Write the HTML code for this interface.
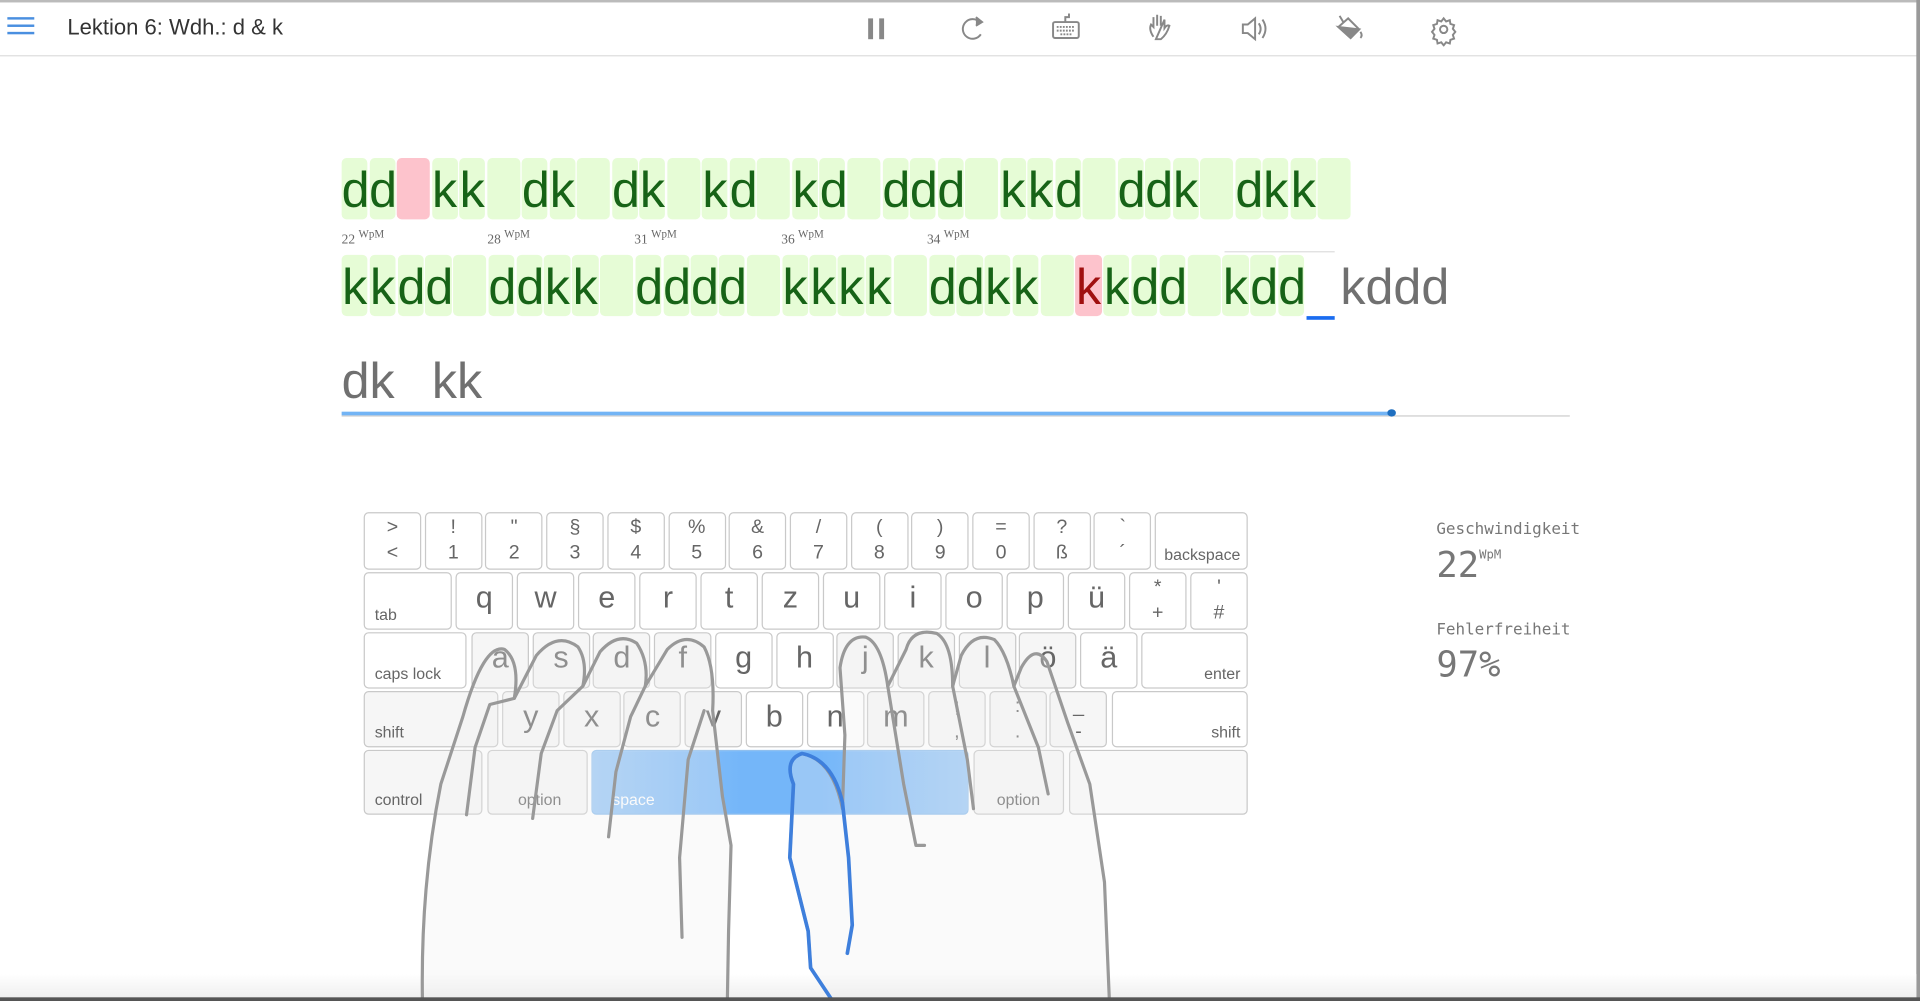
<!DOCTYPE html>
<html><head><meta charset="utf-8">
<style>
html,body{margin:0;padding:0;width:1920px;height:1001px;overflow:hidden;background:#fff;}
#s{position:absolute;left:0;top:0;width:1568px;height:817px;transform:scale(1.22449,1.22521);transform-origin:0 0;font-family:"Liberation Sans",Arial,sans-serif;}
.abs{position:absolute;}
.line{position:absolute;left:279px;height:50px;display:flex;}
.c{display:inline-block;height:50px;background:#e6fcd6;border-radius:4px;color:#176317;font-size:41px;line-height:53px;text-align:center;margin-right:1.5px;}
.l1 .c{width:21px}.l1 .c.sp{width:27.1px}
.l2 .c{width:21.3px}.l2 .c.sp{width:27.2px}
.pk{background:#fdc3cc !important;color:#a01010 !important;}
.wpm{position:absolute;top:186px;font-family:"Liberation Serif",serif;font-size:11px;color:#666;}
.wpm sup{font-size:9px;}
.key{position:absolute;box-sizing:border-box;border:1px solid #c9c9c9;border-radius:4px;background:#fff;color:#666;text-align:center;}
.key .t{position:absolute;left:0;right:0;top:3px;font-size:16px;}
.key .b{position:absolute;left:0;right:0;top:24px;font-size:16px;}
.key .m{position:absolute;left:0;right:0;top:6px;font-size:25px;}
.key .sl{position:absolute;left:8px;bottom:4px;font-size:13px;}
.key .sr{position:absolute;right:5px;bottom:4px;font-size:13px;}
.st{position:absolute;left:1173px;font-family:"DejaVu Sans Mono",monospace;color:#777;}
</style></head><body><div id="s">
<div class="abs" style="left:0;top:0;width:1568px;height:2px;background:#bbb"></div>
<div class="abs" style="left:0;top:45px;width:1568px;height:1px;background:#ddd"></div>
<div class="abs" style="left:1565px;top:0;width:3px;height:817px;background:#999"></div>
<div class="abs" style="left:6px;top:14px;width:22px;height:2px;background:#4a8fe0;box-shadow:0 6px 0 #4a8fe0,0 12px 0 #4a8fe0"></div>
<div class="abs" style="left:55px;top:12px;font-size:18px;color:#333">Lektion 6: Wdh.: d &amp; k</div>
<svg class="abs" style="left:700px;top:10px" width="500" height="28" viewBox="700 10 500 28" fill="none" stroke="#888" stroke-width="1.6">
<rect x="709" y="15" width="4" height="17" fill="#888" stroke="none"/><rect x="718" y="15" width="4" height="17" fill="#888" stroke="none"/>
<path d="M800,18 A8,8 0 1 0 801,28"/><path d="M797,14 L802,18 L797,21" fill="#888"/>
<rect x="860" y="18" width="21" height="13" rx="1.5"/><path d="M870,18 V14 H873 V11"/><path d="M863,22h15M863,25h15M866,28h9" stroke-dasharray="1.5 1"/>
<path d="M942,30 Q938,24 940,20 L942,22 V14 M942,14 V22 M945,12 V21 M948,13 V21 M951,16 V23 Q953,20 955,21 Q953,28 948,32 H944 Z"/>
<path d="M1015,20 H1019 L1025,15 V32 L1019,27 H1015 Z"/><path d="M1028,19 Q1031,23.5 1028,28 M1031,16 Q1036,23.5 1031,31"/>
<path d="M1093,22 L1101,15 L1110,24 L1103,31 Z" /><path d="M1093,22 L1110,24 L1103,31 Z" fill="#888"/><path d="M1097,18 L1094,13"/><path d="M1111,26 Q1113,29 1111,31"/>
<circle cx="1179" cy="24" r="3"/><path d="M1179,15 l2,2.5 3,-1 0.5,3 3,1 -1,3 2,2.5 -2,2.5 1,3 -3,1 -0.5,3 -3,-1 -2,2.5 -2,-2.5 -3,1 -0.5,-3 -3,-1 1,-3 -2,-2.5 2,-2.5 -1,-3 3,-1 0.5,-3 3,1 z"/>
</svg>

<div class="line l1" style="top:129px">
<span class="c">d</span><span class="c">d</span><span class="c sp pk"></span><span class="c">k</span><span class="c">k</span><span class="c sp"></span><span class="c">d</span><span class="c">k</span><span class="c sp"></span><span class="c">d</span><span class="c">k</span><span class="c sp"></span><span class="c">k</span><span class="c">d</span><span class="c sp"></span><span class="c">k</span><span class="c">d</span><span class="c sp"></span><span class="c">d</span><span class="c">d</span><span class="c">d</span><span class="c sp"></span><span class="c">k</span><span class="c">k</span><span class="c">d</span><span class="c sp"></span><span class="c">d</span><span class="c">d</span><span class="c">k</span><span class="c sp"></span><span class="c">d</span><span class="c">k</span><span class="c">k</span><span class="c sp"></span>
</div>
<div class="wpm" style="left:279px">22 <sup>WpM</sup></div>
<div class="wpm" style="left:398px">28 <sup>WpM</sup></div>
<div class="wpm" style="left:518px">31 <sup>WpM</sup></div>
<div class="wpm" style="left:638px">36 <sup>WpM</sup></div>
<div class="wpm" style="left:757px">34 <sup>WpM</sup></div>
<div class="abs" style="left:1000px;top:205px;width:90px;height:1px;background:#ddd"></div>
<div class="line l2" style="top:208px">
<span class="c">k</span><span class="c">k</span><span class="c">d</span><span class="c">d</span><span class="c sp"></span><span class="c">d</span><span class="c">d</span><span class="c">k</span><span class="c">k</span><span class="c sp"></span><span class="c">d</span><span class="c">d</span><span class="c">d</span><span class="c">d</span><span class="c sp"></span><span class="c">k</span><span class="c">k</span><span class="c">k</span><span class="c">k</span><span class="c sp"></span><span class="c">d</span><span class="c">d</span><span class="c">k</span><span class="c">k</span><span class="c sp"></span><span class="c pk">k</span><span class="c">k</span><span class="c">d</span><span class="c">d</span><span class="c sp"></span><span class="c">k</span><span class="c">d</span><span class="c">d</span>
<span style="display:inline-block;width:23px;height:50px;border-bottom:3px solid #1a6cf0;box-sizing:content-box"></span>
<span style="font-size:41px;line-height:53px;color:#707070;margin-left:5px">kddd</span>
</div>
<div class="abs" style="left:279px;top:288px;font-size:41px;color:#707070;word-spacing:19px">dk kk</div>
<div class="abs" style="left:279px;top:339px;width:1003px;height:1px;background:#ccc"></div>
<div class="abs" style="left:279px;top:336px;width:858px;height:3px;background:#72b4f5"></div>
<div class="abs" style="left:1133px;top:334px;width:7px;height:6px;border-radius:50%;background:#1f6fc0"></div>

<div class="abs" style="left:0;top:795px;width:1565px;height:20px;background:linear-gradient(#fff,#eee)"></div>

<!-- keyboard -->
<div class="key" style="left:297px;top:418px;width:47px;height:47px"><span class="t">&gt;</span><span class="b">&lt;</span></div>
<div class="key" style="left:346.7px;top:418px;width:47px;height:47px"><span class="t">!</span><span class="b">1</span></div>
<div class="key" style="left:396.4px;top:418px;width:47px;height:47px"><span class="t">"</span><span class="b">2</span></div>
<div class="key" style="left:446.1px;top:418px;width:47px;height:47px"><span class="t">§</span><span class="b">3</span></div>
<div class="key" style="left:495.8px;top:418px;width:47px;height:47px"><span class="t">$</span><span class="b">4</span></div>
<div class="key" style="left:545.5px;top:418px;width:47px;height:47px"><span class="t">%</span><span class="b">5</span></div>
<div class="key" style="left:595.2px;top:418px;width:47px;height:47px"><span class="t">&amp;</span><span class="b">6</span></div>
<div class="key" style="left:644.9px;top:418px;width:47px;height:47px"><span class="t">/</span><span class="b">7</span></div>
<div class="key" style="left:694.6px;top:418px;width:47px;height:47px"><span class="t">(</span><span class="b">8</span></div>
<div class="key" style="left:744.3px;top:418px;width:47px;height:47px"><span class="t">)</span><span class="b">9</span></div>
<div class="key" style="left:794px;top:418px;width:47px;height:47px"><span class="t">=</span><span class="b">0</span></div>
<div class="key" style="left:843.7px;top:418px;width:47px;height:47px"><span class="t">?</span><span class="b">ß</span></div>
<div class="key" style="left:893.4px;top:418px;width:47px;height:47px"><span class="t">`</span><span class="b">´</span></div>
<div class="key" style="left:943px;top:418px;width:76px;height:47px"><span class="sr">backspace</span></div>

<div class="key" style="left:297px;top:467px;width:72px;height:47px"><span class="sl">tab</span></div>
<div class="key" style="left:372px;top:467px;width:47px;height:47px"><span class="m">q</span></div>
<div class="key" style="left:422px;top:467px;width:47px;height:47px"><span class="m">w</span></div>
<div class="key" style="left:472px;top:467px;width:47px;height:47px"><span class="m">e</span></div>
<div class="key" style="left:522px;top:467px;width:47px;height:47px"><span class="m">r</span></div>
<div class="key" style="left:572px;top:467px;width:47px;height:47px"><span class="m">t</span></div>
<div class="key" style="left:622px;top:467px;width:47px;height:47px"><span class="m">z</span></div>
<div class="key" style="left:672px;top:467px;width:47px;height:47px"><span class="m">u</span></div>
<div class="key" style="left:722px;top:467px;width:47px;height:47px"><span class="m">i</span></div>
<div class="key" style="left:772px;top:467px;width:47px;height:47px"><span class="m">o</span></div>
<div class="key" style="left:822px;top:467px;width:47px;height:47px"><span class="m">p</span></div>
<div class="key" style="left:872px;top:467px;width:47px;height:47px"><span class="m">ü</span></div>
<div class="key" style="left:922px;top:467px;width:47px;height:47px"><span class="t">*</span><span class="b">+</span></div>
<div class="key" style="left:972px;top:467px;width:47px;height:47px"><span class="t">'</span><span class="b">#</span></div>

<div class="key" style="left:297px;top:516px;width:84px;height:46px"><span class="sl">caps lock</span></div>
<div class="key" style="left:385px;top:516px;width:47px;height:46px;background:#f6f6f6"><span class="m">a</span></div>
<div class="key" style="left:434.7px;top:516px;width:47px;height:46px;background:#f6f6f6"><span class="m">s</span></div>
<div class="key" style="left:484.4px;top:516px;width:47px;height:46px;background:#f6f6f6"><span class="m">d</span></div>
<div class="key" style="left:534.1px;top:516px;width:47px;height:46px;background:#f6f6f6"><span class="m">f</span></div>
<div class="key" style="left:583.8px;top:516px;width:47px;height:46px"><span class="m">g</span></div>
<div class="key" style="left:633.5px;top:516px;width:47px;height:46px"><span class="m">h</span></div>
<div class="key" style="left:683.2px;top:516px;width:47px;height:46px;background:#f6f6f6"><span class="m">j</span></div>
<div class="key" style="left:732.9px;top:516px;width:47px;height:46px;background:#f6f6f6"><span class="m">k</span></div>
<div class="key" style="left:782.6px;top:516px;width:47px;height:46px;background:#f6f6f6"><span class="m">l</span></div>
<div class="key" style="left:832.3px;top:516px;width:47px;height:46px;background:#f6f6f6"><span class="m">ö</span></div>
<div class="key" style="left:882px;top:516px;width:47px;height:46px"><span class="m">ä</span></div>
<div class="key" style="left:932px;top:516px;width:87px;height:46px"><span class="sr">enter</span></div>

<div class="key" style="left:297px;top:564px;width:110px;height:46px;background:#f6f6f6"><span class="sl">shift</span></div>
<div class="key" style="left:410px;top:564px;width:47px;height:46px;background:#f6f6f6"><span class="m">y</span></div>
<div class="key" style="left:459.7px;top:564px;width:47px;height:46px;background:#f6f6f6"><span class="m">x</span></div>
<div class="key" style="left:509.4px;top:564px;width:47px;height:46px;background:#f6f6f6"><span class="m">c</span></div>
<div class="key" style="left:559.1px;top:564px;width:47px;height:46px;background:#f6f6f6"><span class="m">v</span></div>
<div class="key" style="left:608.8px;top:564px;width:47px;height:46px"><span class="m">b</span></div>
<div class="key" style="left:658.5px;top:564px;width:47px;height:46px"><span class="m">n</span></div>
<div class="key" style="left:708.2px;top:564px;width:47px;height:46px;background:#f6f6f6"><span class="m">m</span></div>
<div class="key" style="left:757.9px;top:564px;width:47px;height:46px;background:#f6f6f6"><span class="t">;</span><span class="b">,</span></div>
<div class="key" style="left:807.6px;top:564px;width:47px;height:46px;background:#f6f6f6"><span class="t">:</span><span class="b">.</span></div>
<div class="key" style="left:857.3px;top:564px;width:47px;height:46px;background:#f6f6f6"><span class="t">_</span><span class="b">-</span></div>
<div class="key" style="left:908px;top:564px;width:111px;height:46px"><span class="sr">shift</span></div>

<div class="key" style="left:297px;top:612px;width:97px;height:53px;background:#f6f6f6"><span class="sl">control</span></div>
<div class="key" style="left:398px;top:612px;width:82px;height:53px;background:#f6f6f6"><span class="sl" style="left:24px">option</span></div>
<div class="key" style="left:483px;top:612px;width:308px;height:53px;background:linear-gradient(90deg,#9cc9f7,#74b6f9 40%,#74b6f9 60%,#9cc9f7);border-color:#8fbfee"><span class="sl" style="left:16px;color:#fff">space</span></div>
<div class="key" style="left:795px;top:612px;width:74px;height:53px;background:#f6f6f6"><span class="sl" style="left:18px">option</span></div>
<div class="key" style="left:873px;top:612px;width:146px;height:53px;background:#f9f9f9"></div>

<svg class="abs" style="left:0;top:0" width="1568" height="817" viewBox="0 0 1568 817" fill="none" stroke-linejoin="round" stroke-linecap="round">
<g stroke="#999" stroke-width="2.6" fill="rgba(240,240,240,0.3)">
<path d="M345,817 C344,760 348,700 360,640 L378,585 Q395,525 412,530 Q425,540 420,570 L438,535 Q455,515 472,528 Q480,540 476,560 L490,532 Q505,515 520,525 Q530,540 527,560 L545,530 Q560,515 575,528 Q584,545 582,580 L590,650 L597,690 L595,760 L594,817 Z"/>
<path d="M680,817 L662,790 L660,760 L645,700 L648,640 Q640,620 655,615 Q680,620 688,660 L690,600 L686,545 Q690,518 707,520 Q720,525 725,560 L740,530 Q745,512 765,517 Q778,525 778,560 L785,535 Q795,515 812,522 Q822,532 828,560 L834,545 Q845,525 855,540 L872,590 L890,640 L902,720 L906,817 Z"/>
</g>
<g stroke="#999" stroke-width="2.6">
<path d="M381,665 L388,610 L400,575 L420,570"/>
<path d="M435,668 L442,615 L455,580 L476,560"/>
<path d="M497,683 L503,630 L515,585 L527,560"/>
<path d="M557,765 L555,700 L562,620 L575,580"/>
<path d="M725,560 L738,640 L748,690 L755,690"/>
<path d="M778,560 L790,620 L795,660"/>
<path d="M828,560 L848,610 L856,648"/>
</g>
<path d="M692,778 L696,755 L693,700 L688,655 Q680,620 655,615 Q640,620 648,640 L645,700 L660,760 L662,790 L680,817" stroke="#3e7fdc" stroke-width="3"/>
</svg>

<div class="st" style="top:425px;font-size:13px">Geschwindigkeit</div>
<div class="st" style="top:444px;font-size:29px">22<sup style="font-size:10px;vertical-align:top;position:relative;top:4px">WpM</sup></div>
<div class="st" style="top:507px;font-size:13px">Fehlerfreiheit</div>
<div class="st" style="top:525px;font-size:29px">97%</div>
<div class="abs" style="left:0;top:814px;width:1568px;height:3px;background:#555"></div>
</div></body></html>
